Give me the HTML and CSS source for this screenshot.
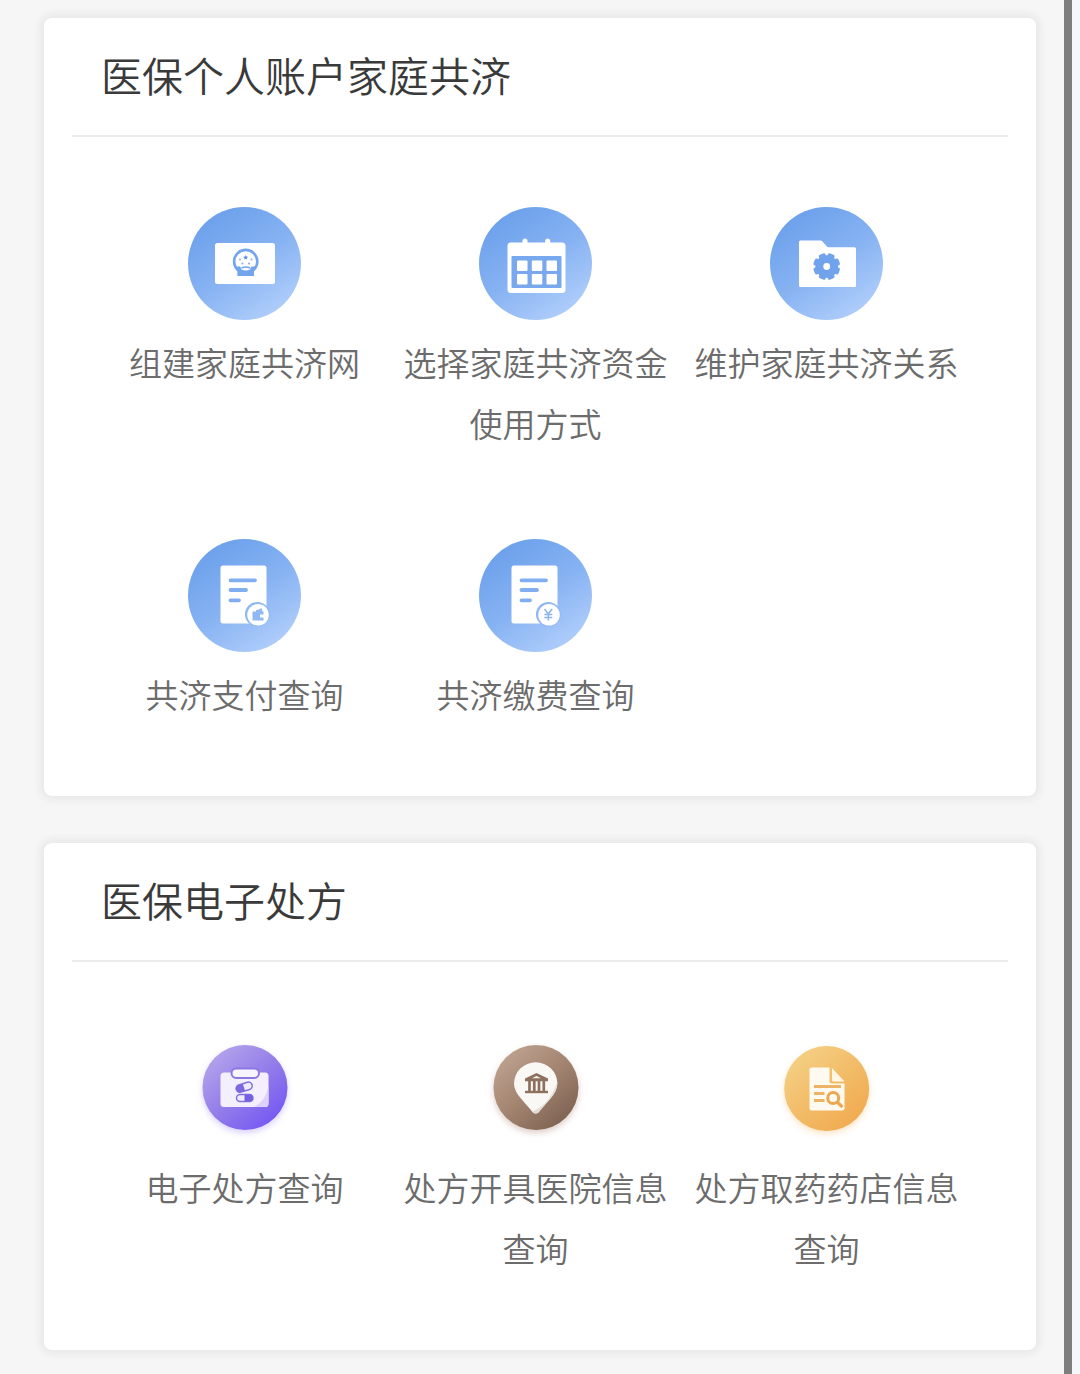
FILE: index.html
```html
<!DOCTYPE html>
<html lang="zh-CN">
<head>
  <meta charset="UTF-8">
  <meta name="viewport" content="width=device-width, initial-scale=1.0">
  <title>医保服务</title>
  <link rel="stylesheet" href="styles.css">
</head>
<body>
  <main class="page">
    <section class="card">
      <h2 class="card-title">医保个人账户家庭共济</h2>
      <div class="grid">
        <a class="item" href="#">
          <svg class="icon" viewBox="0 0 113 113" aria-hidden="true">
            <defs>
              <linearGradient id="blue" x1="0.2" y1="0.05" x2="0.8" y2="0.95">
                <stop offset="0" stop-color="#6ba0eb"/>
                <stop offset="0.5" stop-color="#86b2f2"/>
                <stop offset="1" stop-color="#b0cefb"/>
              </linearGradient>
            </defs>
            <circle cx="56.5" cy="56.5" r="56.5" fill="url(#blue)"/>
            <rect x="27" y="36" width="60" height="41" rx="2.5" fill="#fff"/>
            <circle cx="57.7" cy="54.5" r="11.6" fill="#fff" stroke="#73a5ee" stroke-width="2.6"/>
            <path d="M48.500 59.500h18.400v4h-.9v5.500H49.400v-5.500h-.9z" fill="#73a5ee"/>
            <path d="M52 59h11.500l-1.500 3.500q-4.200 1.800-8.500 0z" fill="#fff"/>
            <path d="M53.500 61q4.200-2 8.500 0" fill="none" stroke="#73a5ee" stroke-width="1.5"/>
            <path d="M57.700 48l.7 1.500 1.700.2-1.200 1.200.3 1.700-1.500-.8-1.500.8.3-1.700-1.200-1.200 1.700-.2z" fill="#5d8fe0"/>
            <g fill="#8fa9d8">
              <circle cx="52" cy="52.5" r="1"/>
              <circle cx="63.500" cy="52.5" r="1"/>
              <circle cx="54.500" cy="56.5" r="1"/>
              <circle cx="61" cy="56.5" r="1"/>
            </g>
          </svg>
          <span class="label">组建家庭共济网</span>
        </a>
        <a class="item" href="#">
          <svg class="icon" viewBox="0 0 113 113" aria-hidden="true">
            <circle cx="56.5" cy="56.5" r="56.5" fill="url(#blue)"/>
            <rect x="28.5" y="35.5" width="58" height="50.5" rx="3.5" fill="#fff"/>
            <path d="M46 34v5M68.7 34v5" stroke="#fff" stroke-width="5" stroke-linecap="round"/>
            <rect x="32.5" y="49" width="50" height="32" rx="1" fill="#78a8ee"/>
            <g fill="#fff">
              <rect x="38" y="53.5" width="10.5" height="10.5" rx="1"/>
              <rect x="52.8" y="53.5" width="10.5" height="10.5" rx="1"/>
              <rect x="67.5" y="53.5" width="10.5" height="10.5" rx="1"/>
              <rect x="38" y="67" width="10.5" height="10.5" rx="1"/>
              <rect x="52.8" y="67" width="10.5" height="10.5" rx="1"/>
              <rect x="67.5" y="67" width="10.5" height="10.5" rx="1"/>
            </g>
          </svg>
          <span class="label">选择家庭共济资金使用方式</span>
        </a>
        <a class="item" href="#">
          <svg class="icon" viewBox="0 0 113 113" aria-hidden="true">
            <circle cx="56.5" cy="56.5" r="56.5" fill="url(#blue)"/>
            <path d="M30.5 33.5h20q1 0 1.7.8l5.5 6h26.800q1.5 0 1.5 1.5V78.500q0 1.500-1.500 1.500h-54q-1.500 0-1.500-1.500V35q0-1.500 1.500-1.500z" fill="#fff"/>
            <g fill="#71a3ec">
              <circle cx="56.7" cy="59.5" r="11.3"/>
              <rect x="53.200" y="46" width="7" height="27" rx="1.800" transform="rotate(22.5 56.7 59.5)"/>
              <rect x="53.200" y="46" width="7" height="27" rx="1.800" transform="rotate(67.5 56.7 59.5)"/>
              <rect x="53.200" y="46" width="7" height="27" rx="1.800" transform="rotate(112.5 56.7 59.5)"/>
              <rect x="53.200" y="46" width="7" height="27" rx="1.800" transform="rotate(157.5 56.7 59.5)"/>
            </g>
            <circle cx="56.7" cy="59.5" r="3.4" fill="#fff"/>
          </svg>
          <span class="label">维护家庭共济关系</span>
        </a>
        <a class="item" href="#">
          <svg class="icon" viewBox="0 0 113 113" aria-hidden="true">
            <circle cx="56.5" cy="56.5" r="56.5" fill="url(#blue)"/>
            <rect x="32.5" y="26.5" width="46" height="58" rx="2.5" fill="#fff"/>
            <path d="M42.500 41.300H67M42.500 51H58M42.500 61.300H51" stroke="#80aef0" stroke-width="3.800" stroke-linecap="round"/>
            <circle cx="69.300" cy="75.300" r="12.300" fill="#8db7f4"/>
            <circle cx="70" cy="75.800" r="10.800" fill="#fff"/>
            <path d="M64.500 72.500h3.500v-1.500l3-.5 2.500-1.500 1 3.500h1v3h-3.500v3h3.500v3h-11z" fill="#90b8f3"/>
          </svg>
          <span class="label">共济支付查询</span>
        </a>
        <a class="item" href="#">
          <svg class="icon" viewBox="0 0 113 113" aria-hidden="true">
            <circle cx="56.5" cy="56.5" r="56.5" fill="url(#blue)"/>
            <rect x="32.5" y="26.5" width="46" height="58" rx="2.5" fill="#fff"/>
            <path d="M42.500 41.300H67M42.500 51H58M42.500 61.300H51" stroke="#80aef0" stroke-width="3.800" stroke-linecap="round"/>
            <circle cx="69.300" cy="75.300" r="12.300" fill="#8db7f4"/>
            <circle cx="70" cy="75.800" r="10.800" fill="#fff"/>
            <path d="M65.500 70l3.800 5 3.800-5M69.300 75v6.500M65.300 75.500h8M65.300 78.500h8" fill="none" stroke="#8db5f2" stroke-width="1.500"/>
          </svg>
          <span class="label">共济缴费查询</span>
        </a>
      </div>
    </section>

    <section class="card">
      <h2 class="card-title">医保电子处方</h2>
      <div class="grid">
        <a class="item" href="#">
          <svg class="icon icon-purple" viewBox="0 0 113 113" aria-hidden="true">
            <defs>
              <linearGradient id="purple" x1="0.15" y1="0.1" x2="0.85" y2="0.9">
                <stop offset="0" stop-color="#b3a2ec"/>
                <stop offset="0.5" stop-color="#937ee9"/>
                <stop offset="1" stop-color="#7559f3"/>
              </linearGradient>
            </defs>
            <circle cx="57" cy="55.5" r="42.5" fill="url(#purple)"/>
            <rect x="32.500" y="40.500" width="48" height="34.500" rx="3.500" fill="#f4effe"/>
            <path d="M80.500 53.500v18q0 3.500-3.500 3.500H66q12-6 14.500-21.500z" fill="#ddd2fb"/>
            <rect x="43.500" y="36.500" width="27.500" height="9.500" rx="4.700" fill="#f8f4ff" stroke="#8c78e2" stroke-width="2"/>
            <g transform="rotate(-17 56 55.5)">
              <rect x="48" y="51.500" width="16.500" height="7.500" rx="3.700" fill="#f1eaff" stroke="#8270df" stroke-width="1.500"/>
              <path d="M56 51.500h-4.300a3.700 3.700 0 0 0 0 7.500H56z" fill="#7d68df"/>
            </g>
            <rect x="48.500" y="62.500" width="16.500" height="7" rx="3.500" fill="#f1eaff" stroke="#8270df" stroke-width="1.500"/>
            <path d="M56.500 62.500h5a3.500 3.500 0 0 1 0 7h-5z" fill="#7560e2"/>
          </svg>
          <span class="label">电子处方查询</span>
        </a>
        <a class="item" href="#">
          <svg class="icon icon-brown" viewBox="0 0 113 113" aria-hidden="true">
            <defs>
              <linearGradient id="brown" x1="0.15" y1="0.1" x2="0.85" y2="0.9">
                <stop offset="0" stop-color="#bda18e"/>
                <stop offset="0.5" stop-color="#a28470"/>
                <stop offset="1" stop-color="#7f6352"/>
              </linearGradient>
            </defs>
            <circle cx="57" cy="55.5" r="42.5" fill="url(#brown)"/>
            <path d="M56.700 81.500c-2 0-3-1-4-2.500C46 70 35 62 35 51.500a21.700 21.200 0 0 1 43.400 0C78.400 62 67.500 70 60.700 79c-1 1.500-2 2.500-4 2.500z" fill="#faf8f5"/>
            <path d="M78.200 50C79 61.500 67.500 70 60.700 79c-1 1.500-2 2.500-4 2.500-1.700 0-2.600-.7-3.500-1.900C67 74 74 63 78.200 50z" fill="#e2dcd4"/>
            <path d="M57.500 41L69 46.500v2.700H46v-2.700zM57.500 44l-4.500 2.200h9z" fill="#8d705e" fill-rule="evenodd"/>
            <path d="M50.500 49v10M55.300 49v10M60 49v10M64.800 49v10" stroke="#8d705e" stroke-width="2.700"/>
            <path d="M46 60h23" stroke="#8d705e" stroke-width="2.400"/>
          </svg>
          <span class="label">处方开具医院信息查询</span>
        </a>
        <a class="item" href="#">
          <svg class="icon icon-orange" viewBox="0 0 113 113" aria-hidden="true">
            <defs>
              <linearGradient id="orange" x1="0.15" y1="0.1" x2="0.85" y2="0.9">
                <stop offset="0" stop-color="#f5cf84"/>
                <stop offset="0.5" stop-color="#f2bc68"/>
                <stop offset="1" stop-color="#f1ab51"/>
              </linearGradient>
            </defs>
            <circle cx="56.7" cy="56.5" r="42.5" fill="url(#orange)"/>
            <path d="M42 35.500h17.500v14q0 2 2 2h13V76q0 2.500-2.500 2.500H42q-2.500 0-2.500-2.500V38q0-2.500 2.500-2.500z" fill="#fffaf0"/>
            <path d="M62 36l12.500 13.500h-11q-1.500 0-1.500-1.500z" fill="#fff6e4"/>
            <path d="M44 54.500h27M44 61.500h10.500M44 68.500h10.500" stroke="#edb468" stroke-width="2.800"/>
            <circle cx="63.200" cy="66" r="5.500" fill="none" stroke="#eca850" stroke-width="3"/>
            <path d="M67 70l5.500 5" stroke="#eca850" stroke-width="3.200"/>
          </svg>
          <span class="label">处方取药药店信息查询</span>
        </a>
      </div>
    </section>
  </main>
</body>
</html>
```
FILE: styles.css
```css
* {
  box-sizing: border-box;
  margin: 0;
  padding: 0;
}

body {
  font-family: 'Noto Sans CJK SC', sans-serif;
  background: #f6f7fa;
  padding-right: 8px;
}

.page {
  display: flex;
  flex-direction: column;
  gap: 47px;
  min-height: 100vh;
  padding: 18px 28px 24px 44px;
  background: #f6f6f6;
  border-right: 8px solid #7e7e7e;
}

.card {
  padding: 0 28px 71px;
  background: #fff;
  border-radius: 8px;
  box-shadow: 0 0 8px 4px rgba(0, 0, 0, 0.06);
}

.card-title {
  padding: 0 0 5px 29px;
  border-bottom: 2px solid #ececec;
  color: #3a3a3a;
  font-size: 41px;
  font-weight: 350;
  line-height: 112px;
}

.grid {
  display: grid;
  grid-template-columns: repeat(3, 1fr);
  row-gap: 85px;
  padding: 70px 36px 0 27px;
}

.item {
  display: flex;
  flex-direction: column;
  align-items: center;
  gap: 12px;
  color: #6c6c6c;
  text-decoration: none;
}

.icon {
  width: 113px;
  height: 113px;
}

.icon-purple {
  filter: drop-shadow(0 3px 3px rgba(130, 100, 255, 0.3));
}

.icon-brown {
  filter: drop-shadow(0 3px 3px rgba(140, 90, 70, 0.3));
}

.icon-orange {
  filter: drop-shadow(0 3px 3px rgba(245, 170, 70, 0.3));
}

.label {
  font-size: 33px;
  font-weight: 350;
  line-height: 61px;
  text-align: center;
}
```
